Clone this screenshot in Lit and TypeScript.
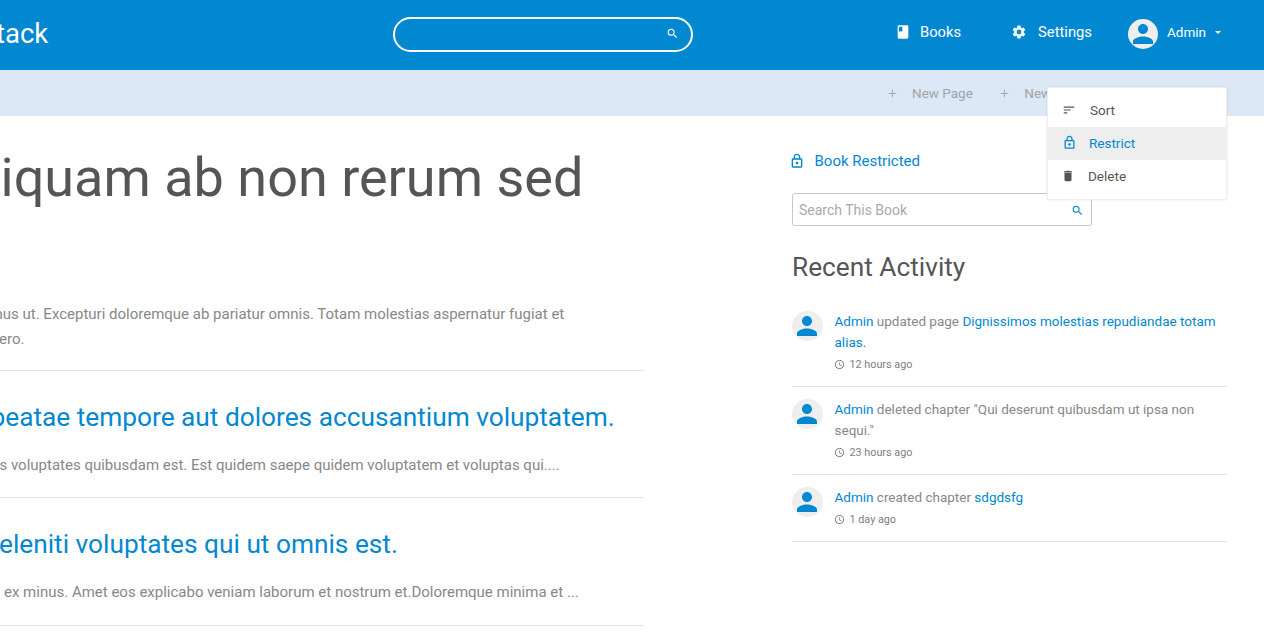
import { LitElement, html, css, svg } from "lit";
import { customElement } from "lit/decorators.js";

const search = svg`<path fill="currentColor" d="M15.5 14h-.79l-.28-.27A6.47 6.47 0 0 0 16 9.5 6.5 6.5 0 1 0 9.5 16c1.61 0 3.09-.59 4.23-1.57l.27.28v.79l5 4.99L20.49 19l-4.99-5zm-6 0C7.01 14 5 11.99 5 9.5S7.01 5 9.5 5 14 7.01 14 9.5 11.99 14 9.5 14z"/>`;
const lock = svg`<path fill="currentColor" d="M18 8h-1V6c0-2.76-2.24-5-5-5S7 3.24 7 6v2H6c-1.1 0-2 .9-2 2v10c0 1.1.9 2 2 2h12c1.1 0 2-.9 2-2V10c0-1.1-.9-2-2-2zM9 6c0-1.66 1.34-3 3-3s3 1.34 3 3v2H9V6zm9 14H6V10h12v10zm-6-3c1.1 0 2-.9 2-2s-.9-2-2-2-2 .9-2 2 .9 2 2 2z"/>`;
const person = svg`<path fill="currentColor" d="M12 12c2.21 0 4-1.79 4-4s-1.79-4-4-4-4 1.79-4 4 1.79 4 4 4zm0 2c-2.67 0-8 1.34-8 4v2h16v-2c0-2.66-5.33-4-8-4z"/>`;
const clock = svg`<path fill="currentColor" d="M11.99 2C6.47 2 2 6.48 2 12s4.47 10 9.99 10C17.52 22 22 17.52 22 12S17.52 2 11.99 2zM12 20c-4.42 0-8-3.58-8-8s3.58-8 8-8 8 3.58 8 8-3.58 8-8 8zm.5-13H11v6l5.25 3.15.75-1.23-4.5-2.67z"/>`;
const plus = svg`<path fill="currentColor" d="M19 13h-6v6h-2v-6H5v-2h6V5h2v6h6v2z"/>`;
const book = svg`<path fill="currentColor" d="M18 2H6c-1.1 0-2 .9-2 2v16c0 1.1.9 2 2 2h12c1.1 0 2-.9 2-2V4c0-1.1-.9-2-2-2zM6 4h5v8l-2.5-1.5L6 12V4z"/>`;
const gear = svg`<path fill="currentColor" d="M19.14 12.94c.04-.3.06-.61.06-.94s-.02-.64-.07-.94l2.03-1.58a.49.49 0 0 0 .12-.61l-1.92-3.32a.49.49 0 0 0-.59-.22l-2.39.96a7.03 7.03 0 0 0-1.62-.94l-.36-2.54a.48.48 0 0 0-.48-.41h-3.84a.48.48 0 0 0-.47.41l-.36 2.54c-.59.24-1.13.57-1.62.94l-2.39-.96a.49.49 0 0 0-.59.22L2.74 8.87a.48.48 0 0 0 .12.61l2.03 1.58c-.05.3-.09.63-.09.94s.02.64.07.94l-2.03 1.58a.49.49 0 0 0-.12.61l1.92 3.32c.12.22.37.29.59.22l2.39-.96c.5.38 1.03.7 1.62.94l.36 2.54c.05.24.24.41.48.41h3.84c.24 0 .44-.17.47-.41l.36-2.54c.59-.24 1.13-.56 1.62-.94l2.39.96c.22.08.47 0 .59-.22l1.92-3.32a.48.48 0 0 0-.12-.61l-2.01-1.58zM12 15.6A3.6 3.6 0 1 1 12 8.4a3.6 3.6 0 0 1 0 7.2z"/>`;
const sort = svg`<path fill="currentColor" d="M3 18h6v-2H3v2zM3 6v2h18V6H3zm0 7h12v-2H3v2z"/>`;
const trash = svg`<path fill="currentColor" d="M6 19c0 1.1.9 2 2 2h8c1.1 0 2-.9 2-2V7H6v12zM19 4h-3.5l-1-1h-5l-1 1H5v2h14V4z"/>`;

const icon = (p: unknown, size: number) =>
  html`<svg viewBox="0 0 24 24" width=${size} height=${size}>${p}</svg>`;

@customElement("app-root")
export class AppRoot extends LitElement {
  static styles = css`
    :host { display: block; width: 1264px; height: 641px; overflow: hidden; position: relative; background: #fff;
      font-family: Roboto, sans-serif; color: #555; }
    svg { display: block; flex: none; }
    a { color: #0288d1; }
    .top { height: 70px; background: #0288d1; color: #fff; display: flex; align-items: center; }
    .logo { width: 393px; flex: none; font-size: 27.5px; line-height: 1; padding-bottom: 2px; white-space: nowrap; }
    .logo span { display: block; margin-left: -4px; }
    .topsearch { width: 300px; height: 35px; box-sizing: border-box; border: 2px solid #fff; border-radius: 18px;
      display: flex; align-items: center; justify-content: flex-end; padding: 0 12px 1px 0; margin-top: -2px; flex: none; }
    .nav { display: flex; align-items: center; font-size: 14.75px; margin-left: 202px; padding-bottom: 6px; }
    .nav .item { display: flex; align-items: center; }
    .nav .item span { margin-left: 9px; }
    .nav .settings { margin-left: 50px; }
    .nav .settings span { margin-left: 11px; }
    .user { display: flex; align-items: center; margin-left: 36px; font-size: 13.5px; padding-top: 4px; }
    .avatar { width: 30px; height: 30px; border-radius: 50%; background: #eee; color: #0288d1; overflow: hidden; }
    .user .name { margin: 0 0 4px 9px; }
    .caret { width: 0; height: 0; border: 3px solid transparent; border-top-color: #fff; border-bottom: 0; margin: 0 0 4px 9px; }
    .sub { height: 46px; background: #dce8f6; display: flex; align-items: center; padding-left: 886px; font-size: 13.5px; color: #a0a4a8; }
    .sub .act { display: flex; align-items: center; white-space: nowrap; }
    .sub .act span { margin-left: 13px; }
    .sub .act svg { color: #aaa; }
    .sub .act + .act { margin-left: 25.5px; }
    .content { display: flex; gap: 148px; }
    .main { width: 644px; flex: none; overflow: hidden; }
    h1 { margin: 26px 0 0 0.5px; font-weight: 400; font-size: 54px; line-height: 72px; color: #555; white-space: nowrap; height: 160px; }
    .intro { font-size: 15px; line-height: 25px; color: #888; padding-bottom: 18px; border-bottom: 1px solid #e5e5e5; white-space: nowrap; }
    .intro .l1 { display: block; margin-left: -5.5px; }
    .intro .l2 { display: block; margin-left: -1px; }
    .row { border-bottom: 1px solid #e5e5e5; padding: 27px 0 19px; white-space: nowrap; }
    .row h2 { margin: 0; font-weight: 400; font-size: 26.25px; line-height: 38px; color: #0288d1; }
    .row p { margin: 17px 0 0; font-size: 15px; line-height: 25px; color: #888; }
    .r1 h2 { margin-left: -9.5px; }
    .r2 { padding-bottom: 20px; }
    .r2 h2 { margin-left: -1px; }
    .r1 p { margin-left: -0.5px; }
    .r2 p { margin-left: 4px; }
    .side { width: 435px; flex: none; padding-top: 35px; }
    .restricted { display: flex; align-items: center; color: #0288d1; font-size: 15px; height: 20px; white-space: nowrap; }
    .restricted svg { margin-left: -3.5px; }
    .restricted span { margin-left: 10px; }
    .booksearch { width: 300px; height: 33px; box-sizing: border-box; border: 1px solid #c8c8c8; border-radius: 3px;
      margin-top: 22px; display: flex; align-items: center; justify-content: space-between; padding: 1px 7.5px 0 6px;
      color: #aaa; font-size: 14px; }
    .booksearch svg { color: #0288d1; }
    h3 { margin: 22px 0 0; font-weight: 400; font-size: 26.25px; line-height: 38px; color: #555; }
    .acts { margin-top: 16px; }
    .activity { display: flex; gap: 11.5px; padding: 9px 0 14px; border-bottom: 1px solid #e5e5e5; }
    .activity + .activity { padding-top: 12px; }
    .av { width: 31px; height: 30px; border-radius: 50%; background: #eee; color: #0288d1; flex: none; }
    .body { font-size: 13.5px; line-height: 21px; color: #888; min-width: 0; }
    .time { display: flex; align-items: center; font-size: 10.8px; line-height: 14px; margin-top: 5px; color: #808080; }
    .time svg { margin: 0 0 1px -1px; }
    .time span { margin-left: 5px; }
    .menu { position: absolute; left: 1047px; top: 87px; width: 180px; height: 113px; box-sizing: border-box;
      background: #fff; border: 1px solid #eee; box-shadow: 0 0 2px rgba(0,0,0,.1); padding: 6px 0; font-size: 13.5px; color: #555; }
    .menu .mi { height: 33px; box-sizing: border-box; display: flex; align-items: center; padding: 0 0 2px 14px; }
    .menu .mi span { margin-left: 14px; }
    .menu .on { background: #eee; color: #0288d1; }
    .menu .on span { margin-left: 12px; }
    .menu .del svg { margin-left: -1px; }
    .menu .del span { margin-left: 13px; }
  `;

  render() {
    return html`
      <div class="top">
        <div class="logo"><span>tack</span></div>
        <div class="topsearch">${icon(search, 13)}</div>
        <div class="nav">
          <div class="item">${icon(book, 16)}<span>Books</span></div>
          <div class="item settings">${icon(gear, 16)}<span>Settings</span></div>
          <div class="user">
            <div class="avatar">${icon(person, 30)}</div>
            <div class="name">Admin</div>
            <div class="caret"></div>
          </div>
        </div>
      </div>
      <div class="sub">
        <div class="act">${icon(plus, 13)}<span>New Page</span></div>
        <div class="act">${icon(plus, 13)}<span>New Chapter</span></div>
      </div>
      <div class="content">
        <div class="main">
          <h1>iquam ab non rerum sed</h1>
          <div class="intro"><span class="l1">nus ut. Excepturi doloremque ab pariatur omnis. Totam molestias aspernatur fugiat et</span><span class="l2">ero.</span></div>
          <div class="row r1">
            <h2>beatae tempore aut dolores accusantium voluptatem.</h2>
            <p>s voluptates quibusdam est. Est quidem saepe quidem voluptatem et voluptas qui....</p>
          </div>
          <div class="row r2">
            <h2>eleniti voluptates qui ut omnis est.</h2>
            <p>ex minus. Amet eos explicabo veniam laborum et nostrum et.Doloremque minima et ...</p>
          </div>
        </div>
        <div class="side">
          <div class="restricted">${icon(lock, 16)}<span>Book Restricted</span></div>
          <div class="booksearch">Search This Book ${icon(search, 13)}</div>
          <h3>Recent Activity</h3>
          <div class="acts">
            <div class="activity">
              <div class="av">${icon(person, 30)}</div>
              <div class="body">
                <a>Admin</a> updated page <a>Dignissimos molestias repudiandae totam alias.</a>
                <div class="time">${icon(clock, 11)}<span>12 hours ago</span></div>
              </div>
            </div>
            <div class="activity">
              <div class="av">${icon(person, 30)}</div>
              <div class="body">
                <a>Admin</a> deleted chapter "Qui deserunt quibusdam ut ipsa non sequi."
                <div class="time">${icon(clock, 11)}<span>23 hours ago</span></div>
              </div>
            </div>
            <div class="activity">
              <div class="av">${icon(person, 30)}</div>
              <div class="body">
                <a>Admin</a> created chapter <a>sdgdsfg</a>
                <div class="time">${icon(clock, 11)}<span>1 day ago</span></div>
              </div>
            </div>
          </div>
        </div>
      </div>
      <div class="menu">
        <div class="mi">${icon(sort, 14)}<span>Sort</span></div>
        <div class="mi on">${icon(lock, 15)}<span>Restrict</span></div>
        <div class="mi del">${icon(trash, 14)}<span>Delete</span></div>
      </div>
    `;
  }
}
